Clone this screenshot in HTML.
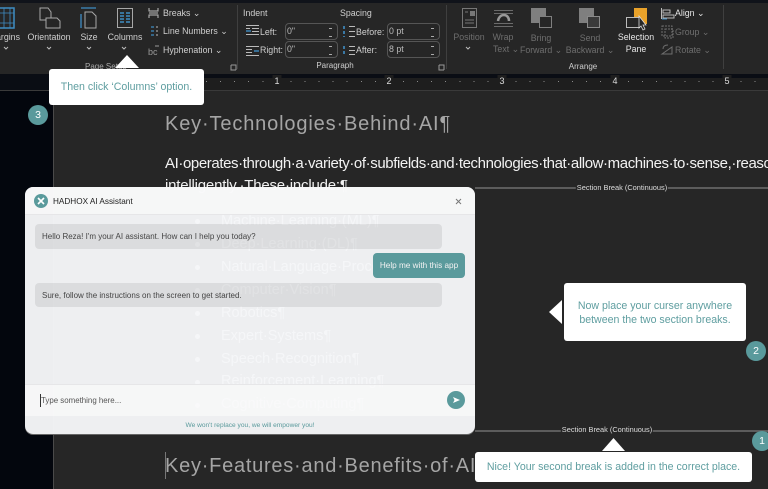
<!DOCTYPE html>
<html><head><meta charset="utf-8"><style>
html,body{margin:0;padding:0;background:#03060d;}
#r{position:relative;width:768px;height:489px;overflow:hidden;background:#03060d;font-family:"Liberation Sans",sans-serif;}
#r div,#r span.a{position:absolute;white-space:nowrap;}
.t{color:#cfcfcf;font-size:8.8px;line-height:12px;}
.c{text-align:center;transform:translateX(-50%);}
.g{color:#6e6e6e;}
.h{color:#a5a5a5;font-size:20px;letter-spacing:.85px;line-height:28px;}
.b{color:#f2f2f2;font-size:15px;line-height:22px;}
.li{color:#fff;font-size:14.5px;line-height:20px;left:221px;}
.dot{left:195px;width:5px;height:5px;border-radius:50%;background:#fff;}
.box{background:#fff;border-radius:3px;color:#5f9ea0;font-size:10.6px;text-align:center;}
.num{width:20px;height:20px;border-radius:50%;background:#5a9a9c;color:#fff;font-size:10.5px;line-height:20px;text-align:center;}
.sp{height:17px;border:1px solid #555;border-radius:4px;box-sizing:border-box;width:53px;color:#bbb;font-size:8.8px;line-height:15px;padding-left:1px;}
.sp:after{content:"";position:absolute;right:5px;top:4px;width:3px;height:7px;border-top:1px solid #aaa;border-bottom:1px solid #aaa;}
.rn{top:75px;font-size:9px;color:#ddd;background:#1e1e1e;padding:0 2px;}
</style></head><body><div id="r">
<!-- ribbon -->
<div style="left:0;top:0;width:768px;height:3px;background:#10131a"></div>
<div style="left:0;top:3px;width:768px;height:71px;background:#262626"></div>
<div style="left:237px;top:5px;width:1px;height:64px;background:#3f3f3f"></div>
<div style="left:446px;top:5px;width:1px;height:64px;background:#3f3f3f"></div>
<div style="left:723px;top:5px;width:1px;height:64px;background:#3f3f3f"></div>
<svg style="position:absolute;left:0;top:0" width="768" height="75" fill="none">
<path d="M0 8h14v20H0" stroke="#3f8dc4" stroke-width="1.5"/><path d="M4 8v20M10 8v20M0 13h14M0 23h14" stroke="#3f8dc4" stroke-width=".8"/>
<path d="M40 8h8l3 4v8h-11z" stroke="#a8a8a8"/><path d="M46 18h11l3 3v7H46z" stroke="#a8a8a8" fill="#262626"/>
<path d="M81 8h15M81 14v14" stroke="#3f8dc4" stroke-width="1.3"/><path d="M85 12h7l4 4v12H85z" stroke="#a8a8a8"/>
<rect x="117.500" y="8.500" width="15" height="19" stroke="#a8a8a8"/><path d="M120 13h4M126 13h4M120 16h4M126 16h4M120 19h4M126 19h4M120 22h4M126 22h4" stroke="#3f8dc4" stroke-width="1.4"/>
<path d="M149 8v3h9V8M149 18v-3h9v3M149 13h9" stroke="#bdbdbd"/>
<path d="M151 27h3M151 31h3M151 35h3" stroke="#3f8dc4" stroke-width="1.2"/><path d="M156 27h2M156 35h2M156 31h2" stroke="#bbb"/>
<path d="M155 46h4" stroke="#999"/>
<path d="M246 28.500h4M252 28.500h7M252 31.500h7M246 34.500h13M246 25.500h13" stroke="#bbb"/><path d="M246 31h5" stroke="#3f8dc4" stroke-width="1.4"/>
<path d="M246 46.500h13M246 49.500h6M246 52.500h6M246 55.500h13" stroke="#bbb"/><path d="M254 51h5" stroke="#3f8dc4" stroke-width="1.4"/>
<path d="M344 26v11M344 46v9" stroke="#3f8dc4" stroke-width="1.6" stroke-dasharray="3 2"/><path d="M349 26.500h6M349 31.500h6M349 36.500h6M349 46.500h6M349 50.500h6M349 54.500h6" stroke="#bbb"/>
<rect x="462.500" y="8.500" width="14" height="19" stroke="#777"/><path d="M465 20h9M465 23h9M465 12h3" stroke="#777"/><rect x="470" y="11" width="5" height="5" fill="#777"/>
<path d="M494 10.500h19M494 13.500h19M494 23.500h19M494 26.500h19" stroke="#6b6b6b"/><path d="M498 21c1-8 11-8 11 0" stroke="#999" stroke-width="2.5"/>
<rect x="531" y="8" width="15" height="15" fill="#7f7f7f"/><rect x="539.500" y="16.500" width="12" height="11" stroke="#7f7f7f" fill="#262626"/>
<rect x="579" y="8" width="15" height="15" fill="#7f7f7f"/><rect x="587.500" y="16.500" width="12" height="11" stroke="#8a8a8a" fill="#3a3a3a"/>
<rect x="634" y="8" width="13" height="16" fill="#e9a22a"/><rect x="626.500" y="17.500" width="13" height="10" stroke="#bbb" fill="#262626"/><path d="M639 16l7 9-3 0 2 4-2 1-2-4-2 2z" fill="#262626" stroke="#ddd" stroke-width=".8"/>
<path d="M661.500 8v11" stroke="#bbb"/><path d="M663 10h7v3h-7zM663 15h11v3h-11z" stroke="#bbb"/><path d="M662 19h5" stroke="#3f8dc4"/>
<path d="M662 26h10v10h-10zM665 29h8v9h-8z" stroke="#6e6e6e" stroke-dasharray="2 1"/>
<path d="M662 54l10-7v7zM663 49c0-3 2-4 5-4" stroke="#6e6e6e"/>
<path d="M231 65h5v5M231 65v5h5" stroke="#999"/><path d="M439 65h5v5M439 65v5h5" stroke="#999"/>
<path d="M4 47l2 2 2-2M47 47l2 2 2-2M87 47l2 2 2-2M122 47l2 2 2-2M466 47l2 2 2-2" stroke="#bbb"/>
</svg>
<div class="t c" style="left:8px;top:31px;">argins</div>
<div class="t c" style="left:49px;top:31px;">Orientation</div>
<div class="t c" style="left:89px;top:31px;">Size</div>
<div class="t c" style="left:125px;top:31px;">Columns</div>
<div class="t" style="left:163px;top:7px;">Breaks ⌄</div>
<div class="t" style="left:163px;top:25px;">Line Numbers ⌄</div>
<div class="t" style="left:163px;top:44px;">Hyphenation ⌄</div>
<div class="t" style="left:148px;top:46px;color:#999;font-size:9px">bc</div>
<div class="t" style="left:85px;top:61px;font-size:8px;color:#aaa">Page Setup</div>
<div class="t" style="left:243px;top:7px;">Indent</div>
<div class="t" style="left:340px;top:7px;">Spacing</div>
<div class="t" style="left:260px;top:26px;">Left:</div>
<div class="t" style="left:260px;top:44px;">Right:</div>
<div class="t" style="left:356px;top:26px;">Before:</div>
<div class="t" style="left:356px;top:44px;">After:</div>
<div class="sp" style="left:285px;top:23px;">0"</div>
<div class="sp" style="left:285px;top:41px;">0"</div>
<div class="sp" style="left:387px;top:23px;">0 pt</div>
<div class="sp" style="left:387px;top:41px;">8 pt</div>
<div class="t c" style="left:335px;top:60px;font-size:8px">Paragraph</div>
<div class="t c g" style="left:469px;top:31px;">Position</div>
<div class="t c g" style="left:503px;top:31px;">Wrap</div><div class="t c g" style="left:506px;top:43px;">Text ⌄</div>
<div class="t c g" style="left:541px;top:32px;">Bring</div><div class="t c g" style="left:541px;top:44px;">Forward ⌄</div>
<div class="t c g" style="left:590px;top:32px;">Send</div><div class="t c g" style="left:590px;top:44px;">Backward ⌄</div>
<div class="t c" style="left:636px;top:31px;color:#e6e6e6">Selection</div><div class="t c" style="left:636px;top:43px;color:#e6e6e6">Pane</div>
<div class="t" style="left:675px;top:7px;color:#e6e6e6">Align ⌄</div>
<div class="t g" style="left:675px;top:26px;">Group ⌄</div>
<div class="t g" style="left:675px;top:44px;">Rotate ⌄</div>
<div class="t c" style="left:583px;top:61px;font-size:8px">Arrange</div>
<div style="left:0;top:74px;width:768px;height:16px;background:#0a0d14"></div>
<!-- ruler -->
<div style="left:53px;top:78px;width:715px;height:12px;background:#1e1e1e"></div>
<div style="left:206px;top:81px;width:562px;height:1px;background:repeating-linear-gradient(90deg,#8a8a8a 0 1px,transparent 1px 14.07px)"></div>
<div style="left:0;top:90px;width:768px;height:1px;background:#3a3a3a"></div>
<div class="t c rn" style="left:277px;">1</div>
<div class="t c rn" style="left:389px;">2</div>
<div class="t c rn" style="left:502px;">3</div>
<div class="t c rn" style="left:615px;">4</div>
<div class="t c rn" style="left:727px;">5</div>
<!-- doc -->
<div style="left:53px;top:91px;width:715px;height:398px;background:#262626;border-left:1px solid #4a4a4a;box-sizing:border-box"></div>
<div class="h" style="left:165px;top:110px;">Key·Technologies·Behind·AI¶</div>
<div class="b" style="left:165px;top:153px;letter-spacing:-.4px;">AI·operates·through·a·variety·of·subfields·and·technologies·that·allow·machines·to·sense,·reason</div>
<div class="b" style="left:165px;top:175px;letter-spacing:-.2px;">intelligently.·These·include:¶</div>
<div style="left:475px;top:187px;width:293px;height:2px;background:#5c5c5c"></div>
<div class="t c" style="left:622px;top:182px;font-size:7.4px;background:#262626;padding:0 1px;color:#ddd">Section Break (Continuous)</div>
<div style="left:475px;top:430px;width:293px;height:2px;background:#5c5c5c"></div>
<div class="t c" style="left:607px;top:424px;font-size:7.4px;background:#262626;padding:0 1px;color:#ddd">Section Break (Continuous)</div>
<div class="h" style="left:165px;top:452px;letter-spacing:.75px">Key·Features·and·Benefits·of·AI</div>
<div style="left:165px;top:452px;width:1px;height:27px;background:#777"></div>
<div class="dot" style="top:219px"></div><div class="li" style="top:211px;">Machine·Learning·(ML)¶</div>
<div class="dot" style="top:242px"></div><div class="li" style="top:234px;">Deep·Learning·(DL)¶</div>
<div class="dot" style="top:265px"></div><div class="li" style="top:257px;">Natural·Language·Processing·(NLP)¶</div>
<div class="dot" style="top:288px"></div><div class="li" style="top:280px;">Computer·Vision¶</div>
<div class="dot" style="top:311px"></div><div class="li" style="top:303px;">Robotics¶</div>
<div class="dot" style="top:334px"></div><div class="li" style="top:326px;">Expert·Systems¶</div>
<div class="dot" style="top:357px"></div><div class="li" style="top:349px;">Speech·Recognition¶</div>
<div class="dot" style="top:380px"></div><div class="li" style="top:371px;">Reinforcement·Learning¶</div>
<div class="dot" style="top:403px"></div><div class="li" style="top:394px;">Cognitive·Computing¶</div>
<!-- modal -->
<div style="left:25px;top:187px;width:450px;height:247px;border-radius:8px;background:rgba(245,246,248,.97);overflow:hidden;box-shadow:0 1px 0 #666">
 <div style="left:0;top:0;width:450px;height:27px;background:rgba(252,252,252,.6);border-bottom:1px solid #e6e6e8"></div>
 <div style="left:9px;top:7px;width:14px;height:14px;border-radius:50%;background:#5a9a9c;"></div>
 <svg style="position:absolute;left:9px;top:7px" width="14" height="14" fill="none"><path d="M4 4l6 6M10 4l-6 6" stroke="#fff" stroke-width="1.600"/></svg>
 <div style="left:28px;top:9px;font-size:8.2px;line-height:12px;color:#222;">HADHOX AI Assistant</div>
 <svg style="position:absolute;left:430px;top:11px" width="10" height="10"><path d="M1 1l5 5M6 1l-5 5" stroke="#777"/></svg>
 <div style="left:10px;top:37px;width:407px;height:25px;border-radius:4px;background:rgba(0,0,0,.08);color:#444;font-size:8px;line-height:26px;padding-left:7px;box-sizing:border-box">Hello Reza! I'm your AI assistant. How can I help you today?</div>
 <div style="left:348px;top:66px;width:92px;height:25px;border-radius:4px;background:#5a9a9c;color:#f2f2f2;font-size:8.2px;line-height:26px;text-align:center">Help me with this app</div>
 <div style="left:10px;top:96px;width:407px;height:24px;border-radius:4px;background:rgba(0,0,0,.08);color:#444;font-size:8px;line-height:26px;padding-left:7px;box-sizing:border-box">Sure, follow the instructions on the screen to get started.</div>
 <div style="left:0;top:197px;width:450px;height:32px;background:rgba(252,252,252,.6);border-top:1px solid #e6e6e8;box-sizing:border-box"></div>
 <div style="left:15px;top:207px;font-size:7.900px;line-height:13px;color:#555;border-left:1px solid #333;">Type something here...</div>
 <div style="left:422px;top:204px;width:18px;height:18px;border-radius:50%;background:#5a9a9c"></div>
 <svg style="position:absolute;left:422px;top:204px" width="18" height="18"><path d="M6 6l7 3-7 3 1.500-3z" fill="#fff"/></svg>
 <div class="c" style="left:225px;top:234px;font-size:6.600px;line-height:10px;color:#5a9a9c">We won't replace you, we will empower you!</div>
</div>
<!-- callouts -->
<div class="box" style="left:49px;top:69px;width:155px;height:36px;line-height:37px;">Then click ‘Columns’ option.</div>
<svg style="position:absolute;left:114px;top:54px" width="26" height="15"><path d="M13 1L25 14H1z" fill="#fff"/></svg>
<div class="box" style="left:564px;top:283px;width:182px;height:58px;line-height:14px;padding-top:16px;box-sizing:border-box">Now place your curser anywhere<br>between the two section breaks.</div>
<svg style="position:absolute;left:548px;top:299px" width="15" height="26"><path d="M1 13L14 1v24z" fill="#fff"/></svg>
<div class="box" style="left:475px;top:452px;width:277px;height:30px;line-height:30px;">Nice! Your second break is added in the correct place.</div>
<svg style="position:absolute;left:601px;top:437px" width="25" height="15"><path d="M12.500 1L24 14H1z" fill="#fff"/></svg>
<div class="num" style="left:28px;top:105px;">3</div>
<div class="num" style="left:746px;top:341px;">2</div>
<div class="num" style="left:752px;top:431px;">1</div>
</div></body></html>
